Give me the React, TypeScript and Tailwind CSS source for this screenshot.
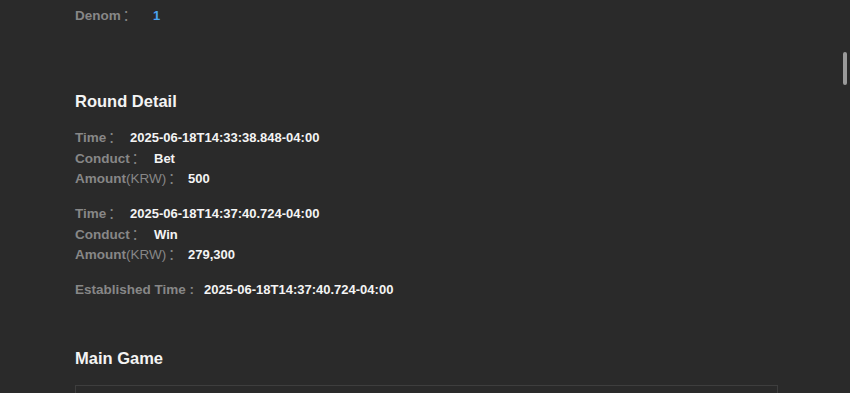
const round1 = [
  { label: 'Time', w: 'w-[55px]', value: '2025-06-18T14:33:38.848-04:00' },
  { label: 'Conduct', w: 'w-[79px]', value: 'Bet' },
  { label: 'Amount', unit: '(KRW)', w: 'w-[113px]', value: '500' },
]

const round2 = [
  { label: 'Time', w: 'w-[55px]', value: '2025-06-18T14:37:40.724-04:00' },
  { label: 'Conduct', w: 'w-[79px]', value: 'Win' },
  { label: 'Amount', unit: '(KRW)', w: 'w-[113px]', value: '279,300' },
]

type Row = { label: string; unit?: string; w: string; value: string }

function DetailRow({ row }: { row: Row }) {
  return (
    <div className="flex items-center h-[20.5px] leading-[20.5px]">
      <span className={`${row.w} shrink-0 whitespace-nowrap text-[13.5px] text-[#878787] font-bold`}>
        {row.label}
        {row.unit && <span className="font-normal">{row.unit}</span>}
        <span className="ml-[2px] font-normal">：</span>
      </span>
      <span className="text-[13px] text-[#f4f4f4] font-bold">{row.value}</span>
    </div>
  )
}

export default function App() {
  return (
    <div
      className="relative w-[850px] h-[393px] overflow-hidden bg-[#2a2a2a] px-[75px]"
      style={{ fontFamily: '"Liberation Sans", Arial, "Noto Sans CJK SC", sans-serif' }}
    >
      <div className="pt-[6px] flex items-center h-[26px] leading-5">
        <span className="w-[78px] shrink-0 text-[13.5px] text-[#878787] font-bold">
          Denom<span className="ml-[2px] font-normal">：</span>
        </span>
        <span className="text-[13px] text-[#4aa3f0] font-bold">1</span>
      </div>

      <h2 className="mt-[63px] text-[16.5px] leading-6 font-bold text-[#f4f4f4]">Round Detail</h2>

      <div className="mt-[15px]">
        {round1.map((row, i) => (
          <DetailRow key={i} row={row} />
        ))}
      </div>

      <div className="mt-[14.5px]">
        {round2.map((row, i) => (
          <DetailRow key={i} row={row} />
        ))}
      </div>

      <div className="mt-[14.5px] flex items-center h-[20.5px] leading-[20.5px]">
        <span className="w-[129px] shrink-0 whitespace-nowrap text-[13.5px] text-[#878787] font-bold">
          Established Time :
        </span>
        <span className="text-[13px] text-[#f4f4f4] font-bold">2025-06-18T14:37:40.724-04:00</span>
      </div>

      <h2 className="mt-[45px] text-[16.5px] leading-6 font-bold text-[#f4f4f4]">Main Game</h2>

      <div className="mt-[15px] w-[703px] h-[120px] border border-[#3e3e3e]" />

      {/* overlay scrollbar */}
      <div className="absolute right-[3px] top-[52px] w-[4px] h-[33px] rounded-full bg-[#9a9a9a]" />
    </div>
  )
}
